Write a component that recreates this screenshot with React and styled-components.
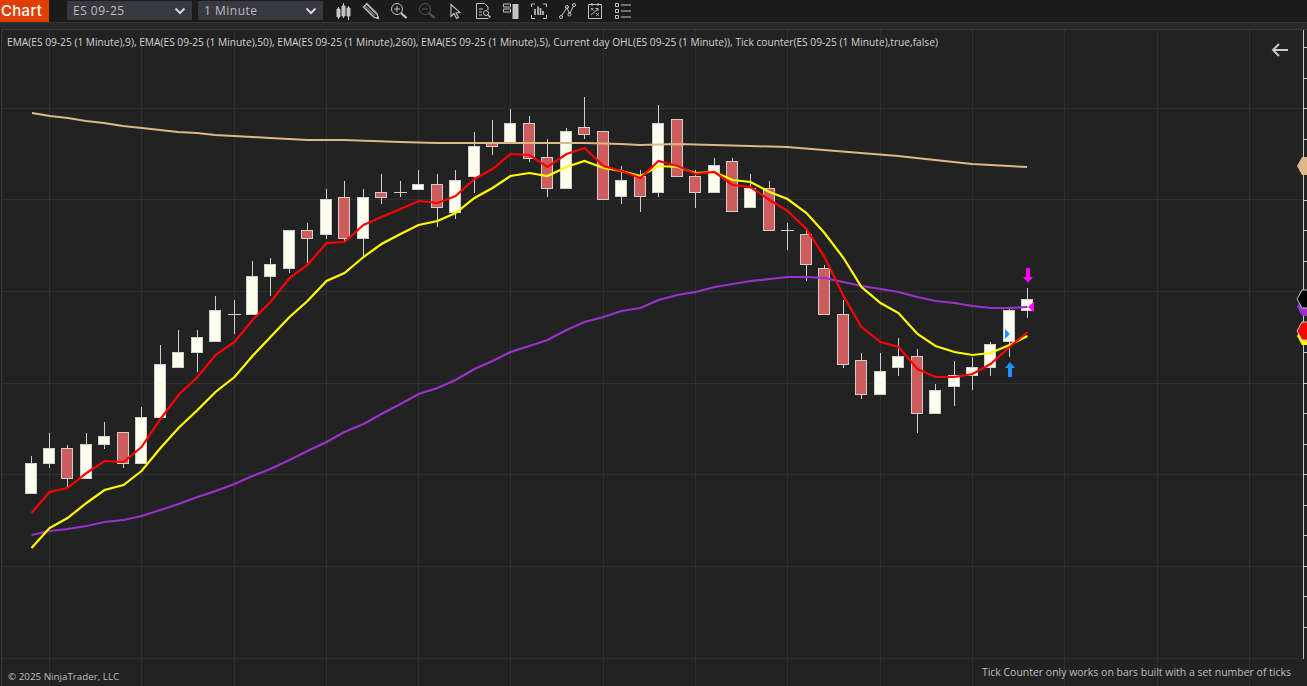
import styled, { createGlobalStyle } from "styled-components";

const GlobalStyle = createGlobalStyle`
  html, body {
    margin: 0;
    padding: 0;
    height: 100%;
    background: #1b1b1b;
    overflow: hidden;
  }
  #root {
    height: 100%;
  }
`;

const Page = styled.div`
  display: flex;
  flex-direction: column;
  height: 686px;
  width: 1307px;
  background: #1b1b1b;
  font-family: "Open Sans", "Liberation Sans", sans-serif;
`;

const Toolbar = styled.div`
  display: flex;
  align-items: flex-start;
  height: 22px;
  flex-shrink: 0;
`;

const Logo = styled.div`
  width: 49px;
  height: 22px;
  margin-right: 18px;
  padding-left: 1px;
  box-sizing: border-box;
  background: #df3f00;
  color: #fff;
  font-family: "Inter", "Liberation Sans", sans-serif;
  font-size: 15px;
  font-weight: 500;
  letter-spacing: 0.3px;
  line-height: 21px;
`;

const Dropdown = styled.div`
  display: flex;
  align-items: center;
  justify-content: space-between;
  width: 125px;
  height: 19px;
  margin-top: 1px;
  margin-right: 6px;
  padding: 0 5px 0 6px;
  box-sizing: border-box;
  background: #383840;
  color: #bdbdbd;
  font-size: 12px;
  letter-spacing: 0.5px;
`;

const IconRow = styled.div`
  display: flex;
`;

const IconCell = styled.div`
  display: flex;
  align-items: center;
  justify-content: center;
  width: 28px;
  height: 22px;
  color: ${(props) => (props.$dim ? "#565656" : "#c4c4c4")};
`;

const Strip = styled.div`
  height: 6px;
  flex-shrink: 0;
  border-top: 1px solid #333336;
  background: #29292c;
`;

const ChartPanel = styled.div`
  position: relative;
  flex: 1;
  margin-left: 1px;
  border-top: 1px solid #3b3b3b;
  border-left: 1px solid #3b3b3b;
  background: #222222;
  overflow: hidden;
`;

const ChartSvg = styled.svg`
  display: block;
  width: 1305px;
  height: 656px;
`;

const Legend = styled.div`
  position: absolute;
  top: 4px;
  left: 5px;
  color: #d2d2d2;
  font-size: 10.2px;
  line-height: 16px;
  white-space: nowrap;
`;

const BackArrow = styled.svg`
  position: absolute;
  top: 12px;
  right: 17px;
  color: #c8c8c8;
`;

const Copyright = styled.div`
  position: absolute;
  left: 6px;
  bottom: 1px;
  color: #bdbdbd;
  font-size: 9.8px;
  line-height: 16px;
`;

const Notice = styled.div`
  position: absolute;
  right: 16px;
  bottom: 6px;
  color: #bdbdbd;
  font-size: 10.47px;
  line-height: 16px;
`;

// x, high, body top, body bottom, low, rising
const candles = [
  [31, 456, 463, 493, 493, 1],
  [49, 433, 448, 463, 468, 1],
  [67, 445, 448, 478, 487, 0],
  [86, 433, 444, 478, 478, 1],
  [104, 422, 436, 444, 449, 1],
  [123, 432, 432, 463, 468, 0],
  [141, 407, 417, 463, 463, 1],
  [160, 345, 364, 417, 417, 1],
  [178, 330, 352, 367, 367, 1],
  [197, 330, 337, 352, 372, 1],
  [215, 296, 310, 341, 341, 1],
  [234, 300, 314, 314, 334, 1],
  [252, 261, 276, 314, 314, 1],
  [270, 258, 264, 276, 296, 1],
  [289, 230, 230, 268, 273, 1],
  [307, 223, 230, 238, 263, 0],
  [326, 189, 199, 234, 239, 1],
  [344, 181, 197, 238, 241, 0],
  [363, 189, 197, 238, 257, 1],
  [381, 174, 192, 197, 204, 0],
  [400, 181, 192, 192, 197, 1],
  [418, 170, 184, 189, 189, 1],
  [437, 174, 184, 207, 227, 0],
  [455, 170, 180, 212, 219, 1],
  [474, 132, 146, 176, 193, 1],
  [492, 120, 143, 146, 155, 0],
  [510, 109, 123, 143, 143, 1],
  [529, 116, 123, 158, 162, 0],
  [547, 139, 157, 188, 197, 0],
  [566, 128, 131, 188, 188, 1],
  [584, 97, 127, 134, 139, 0],
  [603, 131, 131, 199, 199, 0],
  [621, 166, 180, 196, 204, 1],
  [640, 170, 176, 196, 212, 0],
  [658, 105, 123, 192, 197, 1],
  [677, 119, 119, 176, 176, 0],
  [695, 170, 176, 192, 208, 0],
  [714, 158, 165, 192, 192, 1],
  [732, 158, 161, 211, 211, 0],
  [750, 174, 188, 207, 207, 1],
  [769, 181, 188, 230, 230, 0],
  [787, 223, 230, 230, 250, 1],
  [806, 230, 234, 264, 281, 0],
  [824, 265, 268, 314, 314, 0],
  [843, 300, 314, 364, 368, 0],
  [861, 353, 360, 394, 399, 0],
  [880, 353, 371, 394, 394, 1],
  [898, 338, 356, 367, 376, 1],
  [917, 349, 356, 413, 433, 0],
  [935, 384, 390, 413, 413, 1],
  [954, 361, 375, 386, 406, 1],
  [972, 357, 367, 375, 390, 1],
  [990, 342, 344, 367, 376, 1],
  [1009, 308, 310, 341, 357, 1],
  [1027, 288, 299, 310, 318, 1],
];

const xs = candles.map((c) => c[0] + 0.5);

const ema5 = [
  513, 492, 488, 473, 461, 462, 447, 419, 395, 377, 355, 342, 320, 302, 278,
  265, 243, 242, 225, 217, 209, 201, 203, 196, 179, 169, 154, 155, 167, 154,
  148, 166, 171, 178, 161, 166, 174, 172, 185, 187, 200, 211, 229, 257, 296,
  327, 342, 347, 369, 377, 377, 374, 364, 347, 332,
];

const ema9 = [
  548, 528, 518, 503, 490, 485, 471, 448, 428, 410, 392, 377, 356, 337, 317,
  301, 281, 273, 257, 244, 234, 225, 221, 213, 198, 188, 176, 173, 176, 167,
  161, 168, 171, 176, 166, 167, 173, 172, 180, 182, 192, 199, 213, 233, 258,
  287, 303, 313, 334, 346, 352, 355, 353, 345, 336,
];

const ema50 = [
  535, 531, 529, 526, 522, 520, 516, 510, 504, 497, 491, 484, 476, 469, 460,
  451, 442, 432, 424, 414, 404, 394, 388, 380, 369, 361, 352, 346, 340, 330,
  322, 317, 311, 308, 300, 295, 292, 287, 284, 281, 279, 277, 277, 278, 282,
  286, 289, 292, 297, 301, 303, 306, 308, 308, 307,
];

const ema260 = [
  [32, 113], [50, 116], [68, 118], [86, 121], [104, 123], [123, 126], [142, 128],
  [160, 130], [178, 132], [197, 133], [215, 135], [234, 136], [252, 137],
  [270, 138], [289, 139], [307, 140], [344, 140], [400, 142], [437, 143],
  [547, 143], [584, 143], [621, 144], [640, 145], [677, 144], [714, 145],
  [750, 146], [787, 147], [824, 150], [861, 153], [898, 156], [935, 160],
  [972, 164], [1009, 166], [1027, 167],
];

const gridX = [49, 141, 234, 326, 418, 510, 603, 695, 787, 880, 972, 1064, 1157, 1249];
const gridY = [108, 199, 291, 383, 474, 566, 658];
const axisTicks = Array.from({ length: 20 }, (_, i) => Math.round(47 + i * 30.5));

const toPoints = (values) => values.map((y, i) => `${xs[i]},${y}`).join(" ");
const hexagon = (y) =>
  `1297,${y} 1302,${y - 9} 1312,${y - 9} 1312,${y + 9} 1302,${y + 9}`;

function Candle({ data }) {
  const [x, high, top, bottom, low, rising] = data;
  const wickX = x + 0.5;
  if (top === bottom) {
    return (
      <g stroke="#cfcfcf" strokeWidth="1">
        <line x1={wickX} x2={wickX} y1={high} y2={low} />
        <line x1={x - 6} x2={x + 7} y1={top + 0.5} y2={top + 0.5} />
      </g>
    );
  }
  return (
    <g stroke="#cfcfcf" strokeWidth="1">
      <line x1={wickX} x2={wickX} y1={high} y2={low} />
      <rect
        x={x - 5.5}
        y={top + 0.5}
        width="11"
        height={bottom - top}
        fill={rising ? "#fffff0" : "#cd5c5c"}
      />
    </g>
  );
}

const Chevron = () => (
  <svg width="14" height="12" viewBox="0 0 14 12" fill="none">
    <path d="M2.5 3.5 7 8l4.5-4.5" stroke="#d4d4d4" strokeWidth="2" />
  </svg>
);

const Glyph = ({ children }) => (
  <svg width="18" height="18" viewBox="0 0 18 18" fill="none" stroke="currentColor" strokeWidth="1">
    {children}
  </svg>
);

const icons = [
  <Glyph key="candles">
    <path d="M4.5 5v12M9.5 1v15M14.5 4v14" />
    <path d="M3 7h3v8H3zM8 4h3v10H8zM13 6h3v8h-3z" fill="currentColor" />
  </Glyph>,
  <Glyph key="pencil">
    <path d="M5 1.5 1.5 5l10 10 5 1.5-1.5-5z" strokeWidth="1.2" />
    <path d="M3 3.5l10 10M4.5 2.5l10 10M2.5 5l9.5 9.5" strokeWidth="0.8" />
    <path d="M14.5 16l2 .5-.5-2z" fill="currentColor" />
  </Glyph>,
  <Glyph key="zoomin">
    <circle cx="7" cy="7" r="5.5" />
    <path d="M4 7h6M7 4v6" />
    <path d="M11 11l5.5 5" strokeWidth="2.2" />
  </Glyph>,
  <Glyph key="zoomout">
    <circle cx="7" cy="7" r="5.5" />
    <path d="M4 7h6" />
    <path d="M11 11l5.5 5" strokeWidth="2.2" />
  </Glyph>,
  <Glyph key="cursor">
    <path d="M5 2.5v12l3-3 2.5 5 2-1-2.5-4.5 4-.5z" strokeWidth="1.1" />
  </Glyph>,
  <Glyph key="report">
    <path d="M2.5 1.5h8l3.5 3.5v3M2.5 1.5v15h12" />
    <path d="M5 7h4M5 10h3M5 13h3" />
    <circle cx="12" cy="11" r="2.5" />
    <path d="M14 13l2.5 2.5" strokeWidth="1.5" />
  </Glyph>,
  <Glyph key="panel">
    <path d="M1.5 2h7v3h-7zM1.5 7h7v3h-7z" />
    <path d="M10.5 2h6v15h-6z" fill="currentColor" stroke="none" />
  </Glyph>,
  <Glyph key="bars">
    <path d="M5 2H1.5v3M13 2h3.5v3M1.5 13v3.5H5M16.5 13v3.5H13" />
    <path d="M5 7v6M8 4.5V13M10.5 6v7M13 9v4" strokeWidth="1.6" />
  </Glyph>,
  <Glyph key="line">
    <path d="M3.5 14 9 5.5 11.5 12 15.5 4" />
    <circle cx="3" cy="15" r="1.5" />
    <circle cx="9" cy="5" r="1.5" />
    <circle cx="11.5" cy="12.5" r="1.5" />
    <circle cx="16" cy="3" r="1.5" />
  </Glyph>,
  <Glyph key="strategy">
    <path d="M2.5 2.5h13v14h-13zM6 1v3M12 1v3" />
    <path d="M5 13l7-6M9.5 6.5H12V9M5 6l2.5 2.5M7.5 6 5 8.5" />
    <path d="M10 11l3 3M13 11l-3 3" strokeWidth="0.8" />
  </Glyph>,
  <Glyph key="list">
    <path d="M1.5 1.5h3v3h-3zM1.5 7.5h3v3h-3zM1.5 13.5h3v3h-3z" />
    <path d="M7 3h10M7 9h10M7 15h10" />
  </Glyph>,
];

function App() {
  return (
    <Page>
      <GlobalStyle />
      <Toolbar>
        <Logo>Chart</Logo>
        <Dropdown>
          ES 09-25
          <Chevron />
        </Dropdown>
        <Dropdown>
          1 Minute
          <Chevron />
        </Dropdown>
        <IconRow>
          {icons.map((icon) => (
            <IconCell key={icon.key} $dim={icon.key === "zoomout"}>
              {icon}
            </IconCell>
          ))}
        </IconRow>
      </Toolbar>
      <Strip />
      <ChartPanel>
        <ChartSvg viewBox="2 30 1305 656">
          {gridX.map((x) => (
            <line key={x} x1={x + 0.5} x2={x + 0.5} y1="30" y2="686" stroke="#303030" />
          ))}
          {gridY.map((y) => (
            <line key={y} x1="2" x2="1303" y1={y + 0.5} y2={y + 0.5} stroke="#303030" />
          ))}
          {candles.map((c) => (
            <Candle key={c[0]} data={c} />
          ))}
          <polyline
            points={ema260.map((p) => p.join(",")).join(" ")}
            fill="none"
            stroke="#deb887"
            strokeWidth="2"
          />
          <polyline points={toPoints(ema50)} fill="none" stroke="#9932cc" strokeWidth="2.2" />
          <polyline points={toPoints(ema9)} fill="none" stroke="#ffff00" strokeWidth="2.2" />
          <polyline points={toPoints(ema5)} fill="none" stroke="#ff0000" strokeWidth="2.2" />

          <path d="M1008 377v-9h-3l5-6 5 6h-3v9z" fill="#1e90ff" />
          <path d="M1026 268h4v9h3l-5 6-5-6h3z" fill="#ff00ff" />
          <path d="M1005 329l5 5-5 5z" fill="#1e90ff" />
          <path d="M1034 301.5v11l-6-5.5z" fill="#ff00ff" />

          <line x1="1303.5" x2="1303.5" y1="30" y2="659" stroke="#c8c8c8" />
          {axisTicks.map((y) => (
            <line key={y} x1="1304" x2="1307" y1={y + 0.5} y2={y + 0.5} stroke="#c8c8c8" />
          ))}
          <polygon points={hexagon(166)} fill="#deb887" />
          <polygon points={hexagon(307)} fill="#9932cc" />
          <polygon points={hexagon(299)} fill="#000" stroke="#c8c8c8" />
          <polygon points={hexagon(336)} fill="#ffff00" />
          <polygon points={hexagon(331)} fill="#ff0000" stroke="#c8c8c8" />
        </ChartSvg>
        <Legend>
          EMA(ES 09-25 (1 Minute),9), EMA(ES 09-25 (1 Minute),50), EMA(ES 09-25 (1 Minute),260),
          EMA(ES 09-25 (1 Minute),5), Current day OHL(ES 09-25 (1 Minute)), Tick counter(ES 09-25
          (1 Minute),true,false)
        </Legend>
        <BackArrow width="20" height="16" viewBox="0 0 20 16" fill="none" stroke="currentColor" strokeWidth="2">
          <path d="M18 8H3M9 2 3 8l6 6" />
        </BackArrow>
        <Copyright>© 2025 NinjaTrader, LLC</Copyright>
        <Notice>Tick Counter only works on bars built with a set number of ticks</Notice>
      </ChartPanel>
    </Page>
  );
}

export default App;
